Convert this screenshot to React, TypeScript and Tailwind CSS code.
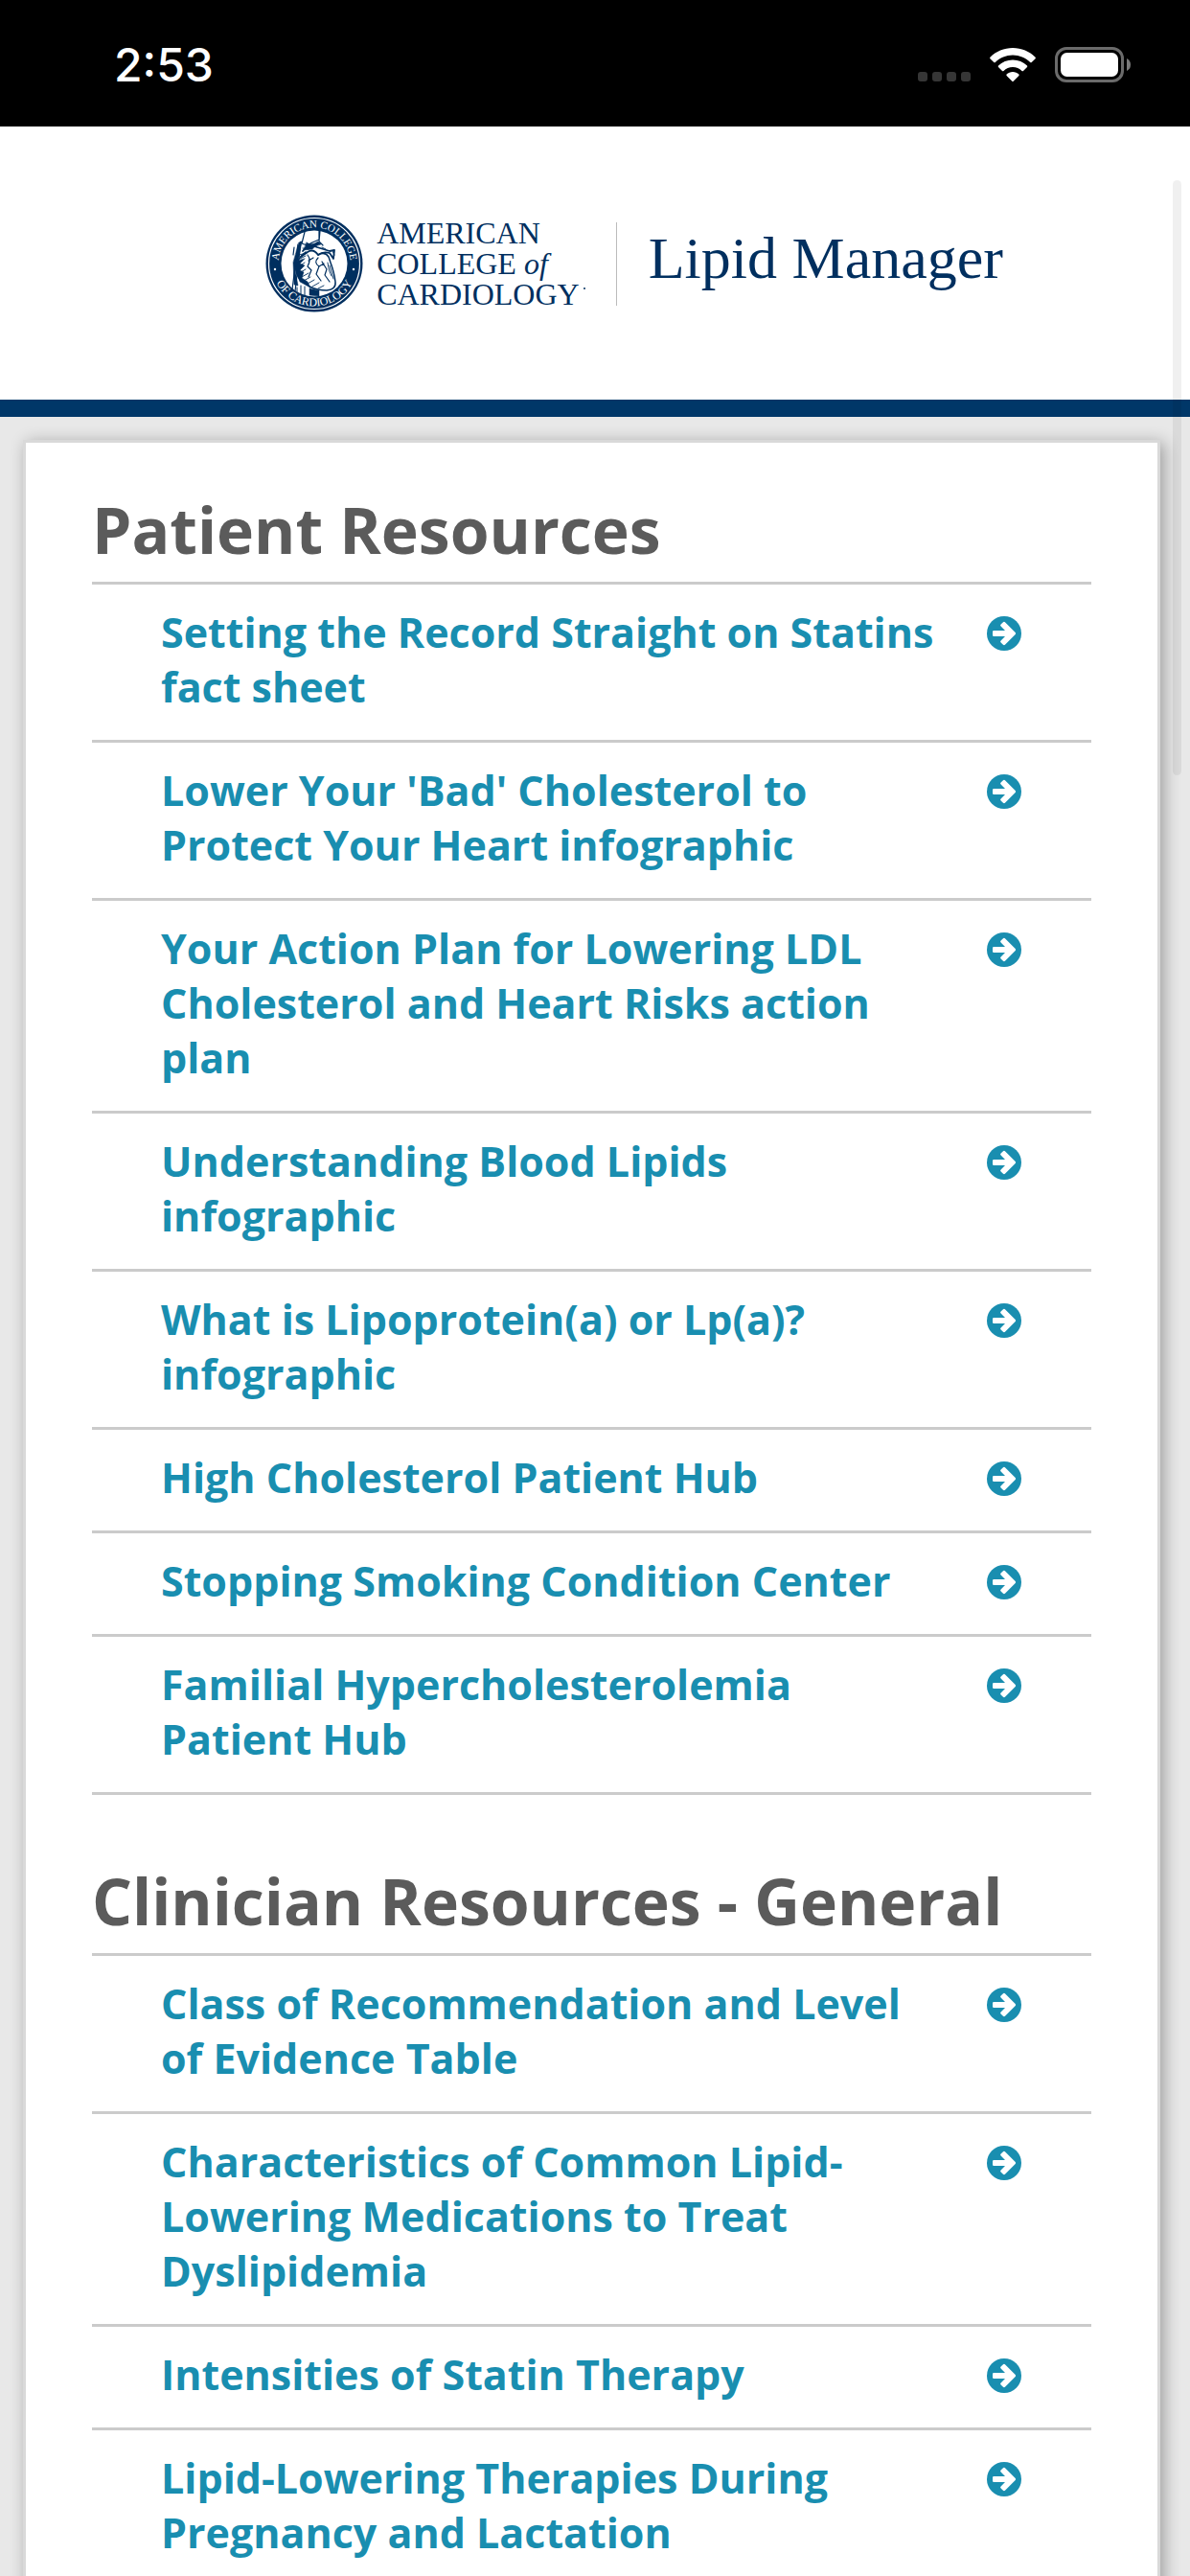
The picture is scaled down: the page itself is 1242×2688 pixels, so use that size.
type Section = {
  title: string;
  links: string[];
};

const sections: Section[] = [
  {
    title: "Patient Resources",
    links: [
      "Setting the Record Straight on Statins fact sheet",
      "Lower Your 'Bad' Cholesterol to Protect Your Heart infographic",
      "Your Action Plan for Lowering LDL Cholesterol and Heart Risks action plan",
      "Understanding Blood Lipids infographic",
      "What is Lipoprotein(a) or Lp(a)? infographic",
      "High Cholesterol Patient Hub",
      "Stopping Smoking Condition Center",
      "Familial Hypercholesterolemia Patient Hub",
    ],
  },
  {
    title: "Clinician Resources - General",
    links: [
      "Class of Recommendation and Level of Evidence Table",
      "Characteristics of Common Lipid-Lowering Medications to Treat Dyslipidemia",
      "Intensities of Statin Therapy",
      "Lipid-Lowering Therapies During Pregnancy and Lactation",
    ],
  },
];

const ArrowCircle = () => (
  <svg viewBox="0 0 36 36" className="h-9 w-9" aria-hidden="true">
    <circle cx="18" cy="18" r="18" fill="currentColor" />
    <path
      d="M7.200 15H19L14.600 10.600Q13.500 9.500 14.600 8.400L16.700 6.400Q18 5.300 19.200 6.400L29.700 16.900Q30.600 18 29.700 19.100L19.200 29.600Q18 30.700 16.700 29.600L14.600 27.600Q13.500 26.500 14.600 25.400L19 21H7.200Q6 21 6 19.800V16.200Q6 15 7.200 15Z"
      fill="white"
    />
  </svg>
);

const StatusBar = () => (
  <div className="flex h-[132px] shrink-0 items-center justify-between bg-black pl-[119px] pr-[61px] text-white">
    <span className="pt-1 font-['Inter',sans-serif] text-[48px] font-medium leading-[60px]">
      2:53
    </span>
    <div className="flex items-center pt-1">
      {/* No cellular signal */}
      <div className="mr-5 flex gap-[5px] pt-6">
        {[0, 1, 2, 3].map((dot) => (
          <span key={dot} className="h-[10px] w-[10px] rounded-[3px] bg-[#363636]" />
        ))}
      </div>
      <svg viewBox="0 0 48 36" className="mr-5 h-9 w-12 fill-white" aria-label="Wi-Fi">
        <path d="M24 0C33 0 41.500 3.600 47.600 9.700Q48.200 10.500 47.600 11.200L43.700 15Q43 15.600 42.200 15C37.300 10.300 31 7.500 24 7.500S10.700 10.300 5.800 15Q5 15.600 4.300 15L.4 11.200Q-.2 10.500.4 9.700C6.500 3.600 15 0 24 0Z" />
        <path d="M24 12.500C29.800 12.500 35 14.800 39 18.600Q39.600 19.300 39 20L35 24Q34.300 24.600 33.500 24C31 21.500 27.700 20 24 20S17 21.500 14.500 24Q13.700 24.600 13 24L9 20Q8.400 19.300 9 18.600C13 14.800 18.200 12.500 24 12.500Z" />
        <path d="M24 25C26.500 25 28.700 25.900 30.400 27.400Q31 28.200 30.400 28.900L24.700 34.800Q24 35.500 23.300 34.800L17.600 28.900Q17 28.200 17.600 27.400C19.300 25.900 21.500 25 24 25Z" />
      </svg>
      <svg viewBox="0 0 80 38" className="h-[38px] w-20" aria-label="Battery full">
        <rect x="1.500" y="1.500" width="69" height="34" rx="10.500" fill="none" stroke="#6b6b6b" strokeWidth="3" />
        <rect x="6" y="6" width="60" height="25" rx="6.500" fill="white" />
        <path d="M75 12Q79 14 79 18.500T75 25Z" fill="#7a7a7a" />
      </svg>
    </div>
  </div>
);

const Seal = () => (
  <svg viewBox="0 0 102 102" className="h-[102px] w-[102px] shrink-0" aria-label="American College of Cardiology seal">
    <defs>
      <path id="seal-top" d="M13.500 51A37.500 37.500 0 0 1 88.500 51" />
      <path id="seal-bottom" d="M6.500 51A44.500 44.500 0 0 0 95.500 51" />
    </defs>
    <circle cx="51" cy="51" r="50.500" fill="#002f5f" />
    <circle cx="51" cy="51" r="47.500" fill="none" stroke="white" strokeWidth="1.200" />
    <circle cx="51" cy="51" r="34.500" fill="white" />
    <g fill="white" fontFamily="Liberation Serif, serif" fontSize="11" textAnchor="middle">
      <text>
        <textPath href="#seal-top" startOffset="50%">AMERICAN COLLEGE</textPath>
      </text>
      <text fontSize="12">
        <textPath href="#seal-bottom" startOffset="50%">OF CARDIOLOGY</textPath>
      </text>
    </g>
    <circle cx="10" cy="57" r="1.200" fill="white" />
    <circle cx="92" cy="57" r="1.200" fill="white" />
    {/* Heart engraving */}
    <g fill="none" stroke="#002f5f" strokeLinecap="round" strokeLinejoin="round">
      <path d="M30 34L29 42M34 31L28 78M37 28L31 80" strokeWidth="1.200" />
      <path d="M35 29L38 28L35 44L31 58L34 74L30 73L29 50Z" fill="#002f5f" strokeWidth=".5" />
      <path d="M41 18L38 30Q44 33 49 29L56 26V17M57 17L56 28L60 32" strokeWidth="1.200" />
      <path d="M43 29Q48 33 55 28L58 31Q52 32 49 36L40 37Z" fill="#002f5f" strokeWidth=".5" />
      <path d="M39 38Q45 30 54 34L67 38L72 37L71 46L67 40Q60 38 55 42Q50 35 44 39L37 44" strokeWidth="1.800" />
      <path d="M55 42Q62 38 66 44L68 50Q72 61 73 70Q74 78 64 79Q54 79 46 75L37 69Q32 63 32 56Q33 45 42 39" strokeWidth="1.500" />
      <path d="M34 48L31 57L36 70L47 76L44 70L38 66L40 60L36 58L41 53L36 51L41 46Z" fill="#002f5f" strokeWidth=".5" />
      <path d="M44 42Q48 47 44 54L48 58L45 65M55 45Q50 50 56 54L53 62L58 69M59 49L64 57L62 63L67 70M45 48L50 45M56 54L61 51" strokeWidth="1.200" />
      <path d="M65 50Q66 59 69 64M67 53Q69 60 71 67M35 42L43 40M36 46L42 43M35 54L41 50M35 61L42 57M38 65L45 61M40 69L47 65M44 72L51 68M49 75L56 71M55 77L61 74M39 35L45 36M59 34L63 36M70 38L72 42" strokeWidth=".9" />
      <path d="M46 77V84L56 85V79Z" fill="#002f5f" strokeWidth=".5" />
      <path d="M33 76V81M37 74V83M41 75V84" strokeWidth="1" />
    </g>
  </svg>
);

const Header = () => (
  <header className="flex shrink-0 justify-center border-b-[18px] border-[#003768] bg-white pb-[91px] pl-[82px] pt-[92px] font-['Liberation_Serif',serif] text-[#002f5f]">
    <a href="#home" className="flex items-center">
      <Seal />
      <span className="ml-[14px] block whitespace-nowrap text-[32px] leading-8">
        AMERICAN
        <br />
        COLLEGE <i>of</i>
        <br />
        CARDIOLOGY
        {/* Trademark dot */}
        <span className="mb-4 ml-1 inline-block h-[2px] w-[2px] rounded-full bg-current" />
      </span>
      <span className="ml-8 h-[87px] w-px bg-[#bcbcbc]" />
      <span className="ml-[33px] whitespace-nowrap pb-3 text-[62px] leading-[72px]">
        Lipid Manager
      </span>
    </a>
  </header>
);

const ResourceSection = ({ title, links }: Section) => (
  <section className="mb-[66px]">
    <h2 className="border-b-[3px] border-[#cbcbcb] pb-[10px] text-[66px] font-bold leading-[89px] text-[#5b5b5b]">
      {title}
    </h2>
    <ul>
      {links.map((link) => (
        <li key={link} className="border-b-[3px] border-[#cbcbcb]">
          <a
            href="#resource"
            className="flex items-start justify-between pb-[27px] pl-[72px] pr-[73px] pt-[21px] text-[43px] font-bold leading-[57px] text-[#198eb0]"
          >
            <span className="max-w-[814px]">{link}</span>
            <span className="pt-3">
              <ArrowCircle />
            </span>
          </a>
        </li>
      ))}
    </ul>
  </section>
);

const App = () => {
  return (
    <div className="relative flex h-screen flex-col overflow-hidden bg-[#e8e8e8] font-['Open_Sans',sans-serif]">
      <StatusBar />
      <Header />
      <main className="pb-6 pl-6 pr-[31px] pt-6">
        <div className="border-[3px] border-[#d9d9d9] bg-white px-[69px] pt-[46px] shadow-[4px_3px_16px_rgba(0,0,0,0.32)]">
          {sections.map((section) => (
            <ResourceSection key={section.title} {...section} />
          ))}
        </div>
      </main>
      {/* Overlay scroll indicator */}
      <div className="absolute right-[9px] top-[188px] h-[621px] w-[9px] rounded-full bg-black/6" />
    </div>
  );
};

export default App;
